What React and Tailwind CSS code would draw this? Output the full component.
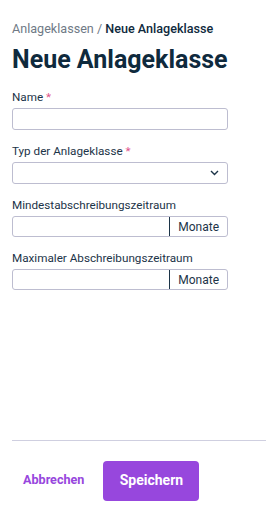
import React from 'react';

function Field({ label, required, children }) {
  return (
    <div className="flex flex-col">
      <label className="text-[11.7px] leading-[16px] text-[#1c3448] mb-[3px]">
        {label}
        {required && <span className="text-[#e0528a]"> *</span>}
      </label>
      {children}
    </div>
  );
}

function UnitInput() {
  return (
    <div className="flex h-[21px] w-[216px] rounded-[3px] border border-[#bdbdd0] bg-white">
      <input className="flex-1 min-w-0 outline-none px-1 text-[12px]" />
      <span className="flex items-center border-l border-[#1c3448] px-[8px] text-[12px] text-[#1c3448]">
        Monate
      </span>
    </div>
  );
}

export default function App() {
  return (
    <div
      className="w-[266px] h-[520px] bg-white flex flex-col"
      style={{ fontFamily: 'Roboto, "Liberation Sans", sans-serif' }}
    >
      <div className="px-[12px] pt-[21px] flex-1">
        <div className="text-[12.6px] leading-[16px]">
          <span className="text-[#6f7a86]">Anlageklassen / </span>
          <span className="text-[#0f2a3d] font-medium">Neue Anlageklasse</span>
        </div>
        <h1 className="mt-[8px] text-[25px] leading-[30px] font-bold text-[#0f2a3d]">
          Neue Anlageklasse
        </h1>
        <div className="mt-[14px] flex flex-col gap-[13px]">
          <Field label="Name" required>
            <input className="h-[22px] w-[216px] rounded-[3px] border border-[#bdbdd0] outline-none px-1 text-[12px]" />
          </Field>
          <Field label="Typ der Anlageklasse" required>
            <div className="h-[22px] w-[216px] rounded-[3px] border border-[#bdbdd0] flex items-center justify-end pr-[8px]">
              <svg width="9" height="6" viewBox="0 0 9 6" fill="none">
                <path d="M1 1l3.5 3.5L8 1" stroke="#1c3448" strokeWidth="1.4" />
              </svg>
            </div>
          </Field>
          <Field label="Mindestabschreibungszeitraum">
            <UnitInput />
          </Field>
          <Field label="Maximaler Abschreibungszeitraum">
            <UnitInput />
          </Field>
        </div>
      </div>
      <div className="ml-[12px] border-t border-[#cfcfe0]" />
      <div className="h-[79px] flex items-center pl-[23px] gap-[19px]">
        <button className="text-[12.6px] font-bold text-[#9747dd]">Abbrechen</button>
        <button className="h-[40px] w-[96px] rounded-[4px] bg-[#9747dd] text-white text-[14px] font-bold">
          Speichern
        </button>
      </div>
    </div>
  );
}
